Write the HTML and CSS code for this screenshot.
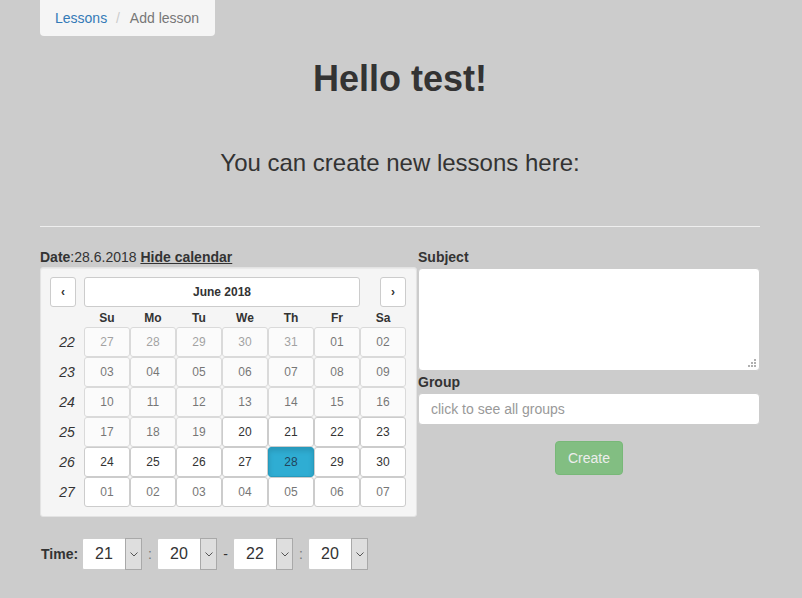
FILE: index.html
```html
<!DOCTYPE html>
<html>
<head>
<meta charset="utf-8">
<title>Add lesson</title>
<link rel="stylesheet" href="styles.css">
</head>
<body>
<div class="page">
  <ol class="breadcrumb">
    <li><a href="#" class="crumb-link">Lessons</a></li>
    <li class="crumb-active">Add lesson</li>
  </ol>

  <h1 class="title">Hello test!</h1>
  <h3 class="subtitle">You can create new lessons here:</h3>
  <hr class="rule">

  <div class="row">
    <div class="left">
      <div class="date-line"><b>Date</b>:28.6.2018 <a href="#" class="hide-link">Hide calendar</a></div>
      <div class="well">
        <div class="cal">
          <button class="btn nav prev">‹</button>
          <button class="btn month"><strong>June 2018</strong></button>
          <button class="btn nav next">›</button>

          <span class="dow"></span>
          <span class="dow">Su</span><span class="dow">Mo</span><span class="dow">Tu</span><span class="dow">We</span><span class="dow">Th</span><span class="dow">Fr</span><span class="dow">Sa</span>

          <em class="wk">22</em>
          <button class="btn day dis muted">27</button><button class="btn day dis muted">28</button><button class="btn day dis muted">29</button><button class="btn day dis muted">30</button><button class="btn day dis muted">31</button><button class="btn day dis">01</button><button class="btn day dis">02</button>

          <em class="wk">23</em>
          <button class="btn day dis">03</button><button class="btn day dis">04</button><button class="btn day dis">05</button><button class="btn day dis">06</button><button class="btn day dis">07</button><button class="btn day dis">08</button><button class="btn day dis">09</button>

          <em class="wk">24</em>
          <button class="btn day dis">10</button><button class="btn day dis">11</button><button class="btn day dis">12</button><button class="btn day dis">13</button><button class="btn day dis">14</button><button class="btn day dis">15</button><button class="btn day dis">16</button>

          <em class="wk">25</em>
          <button class="btn day dis">17</button><button class="btn day dis">18</button><button class="btn day dis">19</button><button class="btn day">20</button><button class="btn day">21</button><button class="btn day">22</button><button class="btn day">23</button>

          <em class="wk">26</em>
          <button class="btn day">24</button><button class="btn day">25</button><button class="btn day">26</button><button class="btn day">27</button><button class="btn day active">28</button><button class="btn day">29</button><button class="btn day">30</button>

          <em class="wk">27</em>
          <button class="btn day muted">01</button><button class="btn day muted">02</button><button class="btn day muted">03</button><button class="btn day muted">04</button><button class="btn day muted">05</button><button class="btn day muted">06</button><button class="btn day muted">07</button>
        </div>
      </div>
    </div>

    <div class="right">
      <label class="lbl">Subject</label>
      <div class="ta-wrap">
        <textarea class="ta"></textarea>
        <svg class="grip" width="8" height="8" viewBox="0 0 8 8">
          <rect x="6" y="0" width="2" height="2" fill="#b0b0b0"/>
          <rect x="3" y="3" width="2" height="2" fill="#b0b0b0"/>
          <rect x="6" y="3" width="2" height="2" fill="#b0b0b0"/>
          <rect x="0" y="6" width="2" height="2" fill="#b0b0b0"/>
          <rect x="3" y="6" width="2" height="2" fill="#b0b0b0"/>
          <rect x="6" y="6" width="2" height="2" fill="#b0b0b0"/>
        </svg>
      </div>
      <label class="lbl lbl-group">Group</label>
      <input class="inp" type="text" placeholder="click to see all groups">
      <div class="actions">
        <button class="btn-create" disabled>Create</button>
      </div>
    </div>
  </div>

  <div class="time-row">
    <b class="time-lbl">Time:</b>
    <div class="sel"><span class="val">21</span><span class="arr"><svg width="8" height="5" viewBox="0 0 8 5"><path d="M0.5 0.5 L4 4 L7.5 0.5" fill="none" stroke="#555" stroke-width="1"/></svg></span></div>
    <span class="sep colon">:</span>
    <div class="sel"><span class="val">20</span><span class="arr"><svg width="8" height="5" viewBox="0 0 8 5"><path d="M0.5 0.5 L4 4 L7.5 0.5" fill="none" stroke="#555" stroke-width="1"/></svg></span></div>
    <span class="sep dash">-</span>
    <div class="sel"><span class="val">22</span><span class="arr"><svg width="8" height="5" viewBox="0 0 8 5"><path d="M0.5 0.5 L4 4 L7.5 0.5" fill="none" stroke="#555" stroke-width="1"/></svg></span></div>
    <span class="sep colon">:</span>
    <div class="sel"><span class="val">20</span><span class="arr"><svg width="8" height="5" viewBox="0 0 8 5"><path d="M0.5 0.5 L4 4 L7.5 0.5" fill="none" stroke="#555" stroke-width="1"/></svg></span></div>
  </div>
</div>
</body>
</html>
```

FILE: styles.css
```css
* { box-sizing: border-box; }
html, body { margin: 0; padding: 0; }
body {
  background: #cccccc;
  font-family: "Liberation Sans", Arial, sans-serif;
  font-size: 14px;
  line-height: 20px;
  color: #333;
}
.page {
  width: 720px;
  margin: 0 0 0 40px;
}
.breadcrumb {
  display: inline-block;
  list-style: none;
  margin: 0;
  padding: 8px 16px 8px 15px;
  background: #f5f5f5;
  border-radius: 0 0 4px 4px;
  vertical-align: top;
}
.breadcrumb li { display: inline-block; }
.breadcrumb li + li:before {
  content: "/\00a0";
  padding: 0 6px 0 5px;
  color: #ccc;
}
.crumb-link { color: #337ab7; text-decoration: none; }
.crumb-active { color: #777; }

.title {
  margin: 23px 0 0;
  font-size: 36px;
  line-height: 40px;
  font-weight: bold;
  text-align: center;
  color: #333;
}
.subtitle {
  margin: 51px 0 0;
  font-size: 24px;
  line-height: 26px;
  font-weight: normal;
  text-align: center;
  color: #333;
}
.rule {
  margin: 50px 0 20px;
  border: 0;
  border-top: 1px solid #eee;
  height: 0;
}

.row { display: flex; align-items: flex-start; }
.left { display: flex; flex-direction: column; }
.date-line { height: 20px; }
.hide-link { color: #333; font-weight: bold; text-decoration: underline; }

.well {
  background: #f5f5f5;
  border: 1px solid #e3e3e3;
  border-radius: 3px;
  padding: 9px 10px 9px 9px;
  box-shadow: inset 0 1px 1px rgba(0,0,0,.05);
}
.cal {
  display: grid;
  grid-template-columns: 34px repeat(7, 46px);
  grid-template-rows: 30px 20px repeat(6, 30px);
}
.btn {
  font-family: "Liberation Sans", Arial, sans-serif;
  font-size: 12px;
  line-height: 18px;
  color: #333;
  background: #fff;
  border: 1px solid #ccc;
  border-radius: 3px;
  padding: 5px 10px;
  margin: 0;
  height: 30px;
  cursor: pointer;
}
.nav { font-weight: bold; }
.prev { justify-self: start; }
.next { justify-self: end; }
.month { grid-column: 2 / span 6; }
.dow {
  text-align: center;
  font-size: 12px;
  font-weight: bold;
  line-height: 23px;
}
.wk {
  text-align: center;
  font-size: 14px;
  line-height: 30px;
  color: #333;
}
.day { padding: 0; width: 46px; }
.day.muted { color: #777; }
.day.dis { opacity: .65; cursor: not-allowed; }
.day.active {
  background: #2fadd3;
  border-color: #269abc;
  color: #22445c;
  box-shadow: inset 0 3px 5px rgba(0,0,0,.125);
}

.right {
  flex: 1;
  margin-left: 1px;
  display: flex;
  flex-direction: column;
}
.lbl { font-weight: bold; height: 20px; margin-bottom: 1px; }
.lbl-group { margin: 1px 0 1px; }
.ta-wrap { position: relative; height: 103px; }
.ta {
  display: block;
  width: 100%;
  height: 103px;
  border: 1px solid #ccc;
  border-radius: 4px;
  background: #fff;
  resize: none;
  padding: 6px 12px;
  font-family: "Liberation Sans", Arial, sans-serif;
  font-size: 14px;
}
.grip { position: absolute; right: 4px; bottom: 4px; }
.inp {
  display: block;
  width: 100%;
  height: 32px;
  border: 1px solid #ccc;
  border-radius: 4px;
  background: #fff;
  padding: 6px 12px;
  font-family: "Liberation Sans", Arial, sans-serif;
  font-size: 14px;
  color: #555;
}
.inp::placeholder { color: #999; }
.actions { text-align: center; margin-top: 16px; }
.btn-create {
  font-family: "Liberation Sans", Arial, sans-serif;
  font-size: 14px;
  line-height: 20px;
  padding: 6px 12px;
  height: 34px;
  color: #fff;
  background: #5cb85c;
  border: 1px solid #4cae4c;
  border-radius: 4px;
  opacity: .65;
}

.time-row {
  display: flex;
  align-items: center;
  margin-top: 21px;
}
.time-lbl { margin-left: 1px; width: 41px; }
.sel {
  display: flex;
  width: 61px;
  height: 32px;
  background: #fff;
  border: 1px solid #ccc;
  border-radius: 2px;
}
.val {
  flex: 1;
  text-align: center;
  font-size: 16px;
  line-height: 30px;
  color: #333;
}
.arr {
  width: 17px;
  background: #dedede;
  border: 1px solid #a9a9a9;
  margin: -1px 0;
  display: flex;
  align-items: center;
  justify-content: center;
}
.sep { width: 14px; text-align: center; }
.colon { color: #777; }
.dash { width: 15px; color: #333; }
```
